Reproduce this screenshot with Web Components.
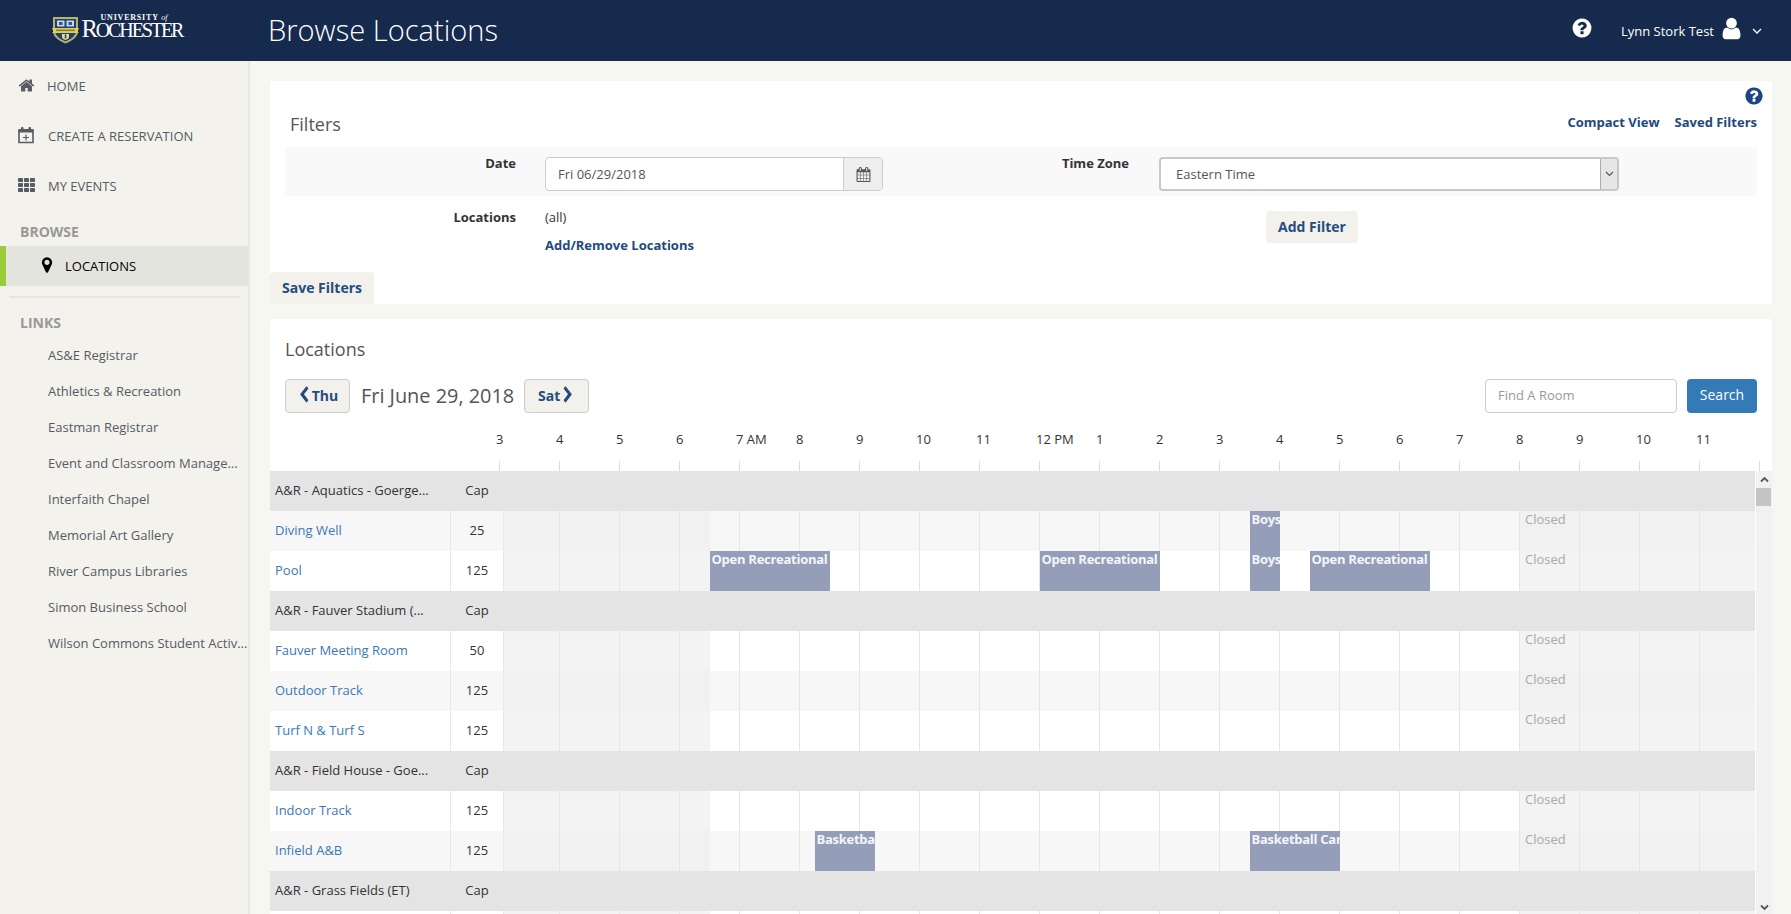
<!DOCTYPE html>
<html lang="en"><head><meta charset="utf-8"><title>Browse Locations</title>
<style>
html,body{margin:0;padding:0;height:100%;overflow:hidden;background:#f7f7f2;font-family:"Open Sans","Noto Sans",sans-serif;font-size:13px;color:#333}
</style></head><body>
<ur-app>
  <ur-header slot="header" title-text="Browse Locations" user="Lynn Stork Test"></ur-header>
  <ur-sidebar slot="side"></ur-sidebar>
  <ur-filters slot="main"></ur-filters>
  <ur-schedule slot="main"></ur-schedule>
</ur-app>
<script>
const P={
home:"M1472 992v480q0 26-19 45t-45 19h-384v-384h-256v384h-384q-26 0-45-19t-19-45v-480q0-1 .5-3t.5-3l575-474 575 474q1 2 1 6zm223-69l-62 74q-8 9-21 11h-3q-13 0-21-7l-692-577-692 577q-12 8-24 7-13-2-21-11l-62-74q-8-10-7-23.500t11-21.500l719-599q32-26 76-26t76 26l244 204v-195q0-14 9-23t23-9h192q14 0 23 9t9 23v408l219 182q10 8 11 21.500t-7 23.500z",
help:"M1024 1376v-192q0-14-9-23t-23-9h-192q-14 0-23 9t-9 23v192q0 14 9 23t23 9h192q14 0 23-9t9-23zm256-672q0-88-55.500-163t-138.500-116-170-41q-243 0-371 213-15 24 8 42l132 100q7 6 19 6 16 0 25-12 53-68 86-92 34-24 86-24 48 0 85.500 26t37.500 59q0 38-20 61t-68 45q-63 28-115.500 86.500t-52.500 125.500v36q0 14 9 23t23 9h192q14 0 23-9t9-23q0-19 21.500-49.500t54.500-49.500q32-18 49-28.500t46-35 44.500-48 28-60.500 12.500-81zm384 192q0 209-103 385.500t-279.500 279.500-385.500 103-385.500-103-279.500-279.500-103-385.500 103-385.500 279.500-279.500 385.500-103 385.500 103 279.500 279.500 103 385.500z",
user:"M1536 1399q0 109-62.500 187t-150.500 78h-854q-88 0-150.500-78t-62.500-187q0-85 8.500-160.500t31.500-152 58.500-131 94-89 134.500-34.500q131 128 313 128t313-128q76 0 134.500 34.500t94 89 58.500 131 31.500 152 8.500 160.500zm-256-887q0 159-112.500 271.500t-271.500 112.500-271.500-112.500-112.500-271.500 112.500-271.500 271.500-112.500 271.500 112.500 112.500 271.500z",
calendar:"M192 1664h288v-288h-288v288zm352 0h320v-288h-320v288zm-352-352h288v-320h-288v320zm352 0h320v-320h-320v320zm-352-384h288v-288h-288v288zm736 736h320v-288h-320v288zm-384-736h320v-288h-320v288zm768 736h288v-288h-288v288zm-384-352h320v-320h-320v320zm-352-864v-288q0-13-9.500-22.500t-22.500-9.500h-64q-13 0-22.500 9.500t-9.500 22.500v288q0 13 9.500 22.500t22.500 9.500h64q13 0 22.500-9.500t9.500-22.500zm736 864h288v-320h-288v320zm-384-384h320v-288h-320v288zm384 0h288v-288h-288v288zm32-480v-288q0-13-9.500-22.500t-22.500-9.500h-64q-13 0-22.500 9.500t-9.500 22.500v288q0 13 9.500 22.500t22.500 9.500h64q13 0 22.500-9.500t9.500-22.500zm384-64v1280q0 52-38 90t-90 38h-1408q-52 0-90-38t-38-90v-1280q0-52 38-90t90-38h128v-96q0-66 47-113t113-47h64q66 0 113 47t47 113v96h384v-96q0-66 47-113t113-47h64q66 0 113 47t47 113v96h128q52 0 90 38t38 90z",
marker:"M1152 640q0-106-75-181t-181-75-181 75-75 181 75 181 181 75 181-75 75-181zm256 0q0 109-33 179l-364 774q-16 33-47.500 52t-67.500 19-67.500-19-46.500-52l-365-774q-33-70-33-179 0-212 150-362t362-150 362 150 150 362z",
left:"M1427 301l-531 531 531 531q19 19 19 45t-19 45l-166 166q-19 19-45 19t-45-19l-742-742q-19-19-19-45t19-45l742-742q19-19 45-19t45 19l166 166q19 19 19 45t-19 45z",
right:"M1363 877l-742 742q-19 19-45 19t-45-19l-166-166q-19-19-19-45t19-45l531-531-531-531q-19-19-19-45t19-45l166-166q19-19 45-19t45 19l742 742q19 19 19 45t-19 45z"
};
const ic=(n,w,h,extra='')=>`<svg viewBox="0 0 1792 1792" width="${w}" height="${h||w}" fill="currentColor" preserveAspectRatio="none" style="display:block;flex:none;${extra}"><path d="${P[n]}"/></svg>`;
function def(name,css,html){
  customElements.define(name,class extends HTMLElement{
    constructor(){super();this.attachShadow({mode:'open'});}
    connectedCallback(){
      const h=typeof html==='function'?html(this):html;
      this.shadowRoot.innerHTML=`<style>${css}</style>${h}`;
    }
  });
}
def('ur-app',`:host{display:grid;grid-template-columns:250px 1541px;grid-template-rows:61px 853px;height:914px;overflow:hidden}
::slotted([slot=header]){grid-column:1/3}
.main{padding:20px 19px 0 20px;display:flex;flex-direction:column;gap:15px;overflow:hidden;min-height:0;box-sizing:border-box}`,
`<slot name="header"></slot><slot name="side"></slot><div class="main"><slot name="main"></slot></div>`);

def('ur-logo',`:host{display:flex;align-items:center;width:268px;padding-left:52px;box-sizing:border-box;flex:none;color:#fff;font-family:"Liberation Serif",serif}
svg{margin-top:-2px}
.t{margin-left:2.500px;display:flex;flex-direction:column;margin-top:-8px}
.u{font-size:8px;font-weight:700;letter-spacing:.8px;line-height:8px;margin-left:19px;margin-bottom:-3px;white-space:nowrap}
.u i{font-weight:400;letter-spacing:0}
.r{font-size:20px;line-height:19px;letter-spacing:-2.1px;white-space:nowrap}
.r b{font-weight:400;font-size:24.500px}`,
`<svg width="27" height="28" viewBox="0 0 27 28" style="flex:none;display:block">
<path d="M1 1h25v14c0 6-6 10-12.500 12.500C7 25 1 21 1 15z" fill="#b6b46a"/>
<path d="M3 3h21v12c0 5-5 8-10.500 10.500C8 23 3 20 3 15z" fill="#1e3f78"/>
<rect x="5" y="4.500" width="7.500" height="6" fill="#c9d6e6"/><rect x="14.500" y="4.500" width="7.500" height="6" fill="#c9d6e6"/>
<rect x="7" y="6" width="3.500" height="3" fill="#2f5690"/><rect x="16.500" y="6" width="3.500" height="3" fill="#2f5690"/>
<path d="M0 12h27l-1.500 3.500 1.500 1.500H0l1.500-1.500z" fill="#e3cf55"/><rect x="4" y="13.500" width="19" height="1.600" fill="#8c7f35"/>
<path d="M10 18h7v3c0 1.500-2 2.500-3.500 3C12 23.500 10 22.500 10 21z" fill="#e8dc8a"/><rect x="12.800" y="18.500" width="1.500" height="4" fill="#1e3f78"/>
</svg><div class="t"><div class="u">UNIVERSITY <i>of</i></div><div class="r"><b>R</b>OCHESTER</div></div>`);

def('ur-header',`:host{display:flex;align-items:center;height:61px;background:#152a4c;color:#fff}
h1{margin:-2px 0 0;font-weight:300;font-size:29.100px;line-height:38px;white-space:nowrap}
.r{margin-left:auto;display:flex;align-items:center;padding-right:29px}
.name{font-size:13px;margin-left:28px;margin-top:1px;white-space:nowrap}
.u{margin-left:5.250px}.c{margin-left:7.750px;margin-top:1px}`,
h=>`<ur-logo></ur-logo><h1>${h.getAttribute('title-text')}</h1><div class="r"><span style="margin-top:-5px">${ic('help',22)}</span><span class="name">${h.getAttribute('user')}</span><span class="u" style="margin-top:-4px">${ic('user',25,25)}</span><svg class="c" width="10" height="7" viewBox="0 0 10 7"><path d="M1 1l4 4 4-4" fill="none" stroke="#fff" stroke-width="1.300"/></svg></div>`);

def('nav-item',`:host{display:flex;align-items:center;height:50px;color:#555b68;font-size:13px;white-space:nowrap;padding-left:18px}
.i{width:17px;display:flex;justify-content:flex-start;margin-right:13px;margin-top:-2px;color:#565b66}
:host([active]){height:40px;background:#e4e4df;color:#000;border-left:6px solid #9acb38;padding-left:36px}
:host([active]) .i{color:#000;width:10px;margin-right:13px}
:host([first]) .i{margin-right:12px}`,
`<span class="i"><slot name="icon"></slot></span><slot></slot>`);
def('link-item',`:host{display:block;height:36px;line-height:36px;padding-left:48px;color:#555b66;font-size:13px;white-space:nowrap;overflow:hidden}`,`<slot></slot>`);

def('ur-sidebar',`:host{display:block;background:#f3f2ec;border-right:2px solid #e9e9e4;box-sizing:border-box;width:250px;height:853px;overflow:hidden}
h4{margin:0;font-size:14px;font-weight:700;line-height:18px;color:#999;padding-left:20px}
.b{margin-top:12px;margin-bottom:5px}
hr{border:0;height:2px;background:#e6e6e1;margin:10px 8px 16px 9px}
.l{margin-bottom:4.500px}`,
()=>`<nav-item first><span slot="icon">${ic('home',17,17)}</span>HOME</nav-item>
<nav-item><svg slot="icon" width="16" height="18" viewBox="0 0 16 18" style="display:block"><path d="M1 4.500h14v12H1z" fill="none" stroke="currentColor" stroke-width="1.600"/><rect x=".5" y="3" width="15" height="3.500" fill="currentColor"/><rect x="3" y="1" width="2.500" height="4" rx="1" fill="currentColor"/><rect x="10.500" y="1" width="2.500" height="4" rx="1" fill="currentColor"/><path d="M8 8.500v6M5 11.500h6" stroke="currentColor" stroke-width="1.200"/></svg>CREATE A RESERVATION</nav-item>
<nav-item><svg slot="icon" width="17" height="14" viewBox="0 0 17 14" style="display:block" fill="currentColor"><rect width="5" height="4" rx=".7"/><rect x="6" width="5" height="4" rx=".7"/><rect x="12" width="5" height="4" rx=".7"/><rect y="5" width="5" height="4" rx=".7"/><rect x="6" y="5" width="5" height="4" rx=".7"/><rect x="12" y="5" width="5" height="4" rx=".7"/><rect y="10" width="5" height="4" rx=".7"/><rect x="6" y="10" width="5" height="4" rx=".7"/><rect x="12" y="10" width="5" height="4" rx=".7"/></svg>MY EVENTS</nav-item>
<h4 class="b">BROWSE</h4>
<nav-item active><span slot="icon">${ic('marker',18,18,'margin-left:-4px')}</span>LOCATIONS</nav-item>
<hr><h4 class="l">LINKS</h4>
${['AS&amp;E Registrar','Athletics &amp; Recreation','Eastman Registrar','Event and Classroom Manage...','Interfaith Chapel','Memorial Art Gallery','River Campus Libraries','Simon Business School','Wilson Commons Student Activ...'].map(t=>`<link-item>${t}</link-item>`).join('')}`);

def('ur-button',`:host{display:inline-flex;align-items:center;justify-content:center;gap:1px;box-sizing:border-box;padding-bottom:2px;background:#f2f1ec;border-radius:4px;font-weight:700;font-size:14px;color:#264c7f;white-space:nowrap}
:host([outlined]){border:1px solid #ccc;height:34px}`,`<slot></slot>`);

def('ur-filters',`:host{display:block;background:#fff;border-radius:3px;height:223px;flex:none;overflow:hidden}
.top{display:flex;justify-content:space-between;height:66px;padding-right:15px}
h2{margin:30px 0 0 20px;font-size:18px;font-weight:400;line-height:26px;color:#555}
.rt{display:flex;flex-direction:column;align-items:flex-end}
.hp{color:#1d4380;margin:5px -7px 7px 0}
.lk{display:flex;gap:15px;font-weight:700;line-height:18px;color:#234a7d}
.row{display:grid;grid-template-columns:231px 367px 246px 490px;margin:0 15px}
.r1{background:#f9f9f9;height:49px}
.r2{height:76px}
.lb{text-align:right;font-weight:700;line-height:18px;padding-top:7px;color:#333}
.r2 .lb{padding-top:12px}
.v{margin-left:29px;padding-top:12px;line-height:18px}
.add{display:block;font-weight:700;color:#234a7d;margin-top:10px;white-space:nowrap}
.fld{box-sizing:border-box;height:34px;border:1px solid #ccc;border-radius:4px;background:#fff;display:flex;align-items:center;color:#555;overflow:hidden;margin-top:10px}
.dt{margin-left:29px}
.dt span{flex:1;padding-left:12px}
.ad{width:38px;height:100%;background:#eee;border-left:1px solid #ccc;display:flex;align-items:center;justify-content:center;color:#555}
.sel{margin-left:30px;border:2px solid #c8c8c8}
.sel span{flex:1;padding-left:15px}
.ar{width:16px;height:100%;background:#e6e6e6;border-left:1px solid #aaa;display:flex;align-items:center;justify-content:center}
.sv{display:flex;width:104px;height:32px;border-radius:4px 4px 0 0}
.afb{display:flex;margin:15px 0 0 383px;width:92px;height:32px}
`,
()=>`<div class="top"><h2>Filters</h2><div class="rt"><span class="hp">${ic('help',20)}</span><div class="lk"><span>Compact View</span><span>Saved Filters</span></div></div></div>
<div class="row r1"><div class="lb">Date</div><div class="fld dt"><span>Fri 06/29/2018</span><div class="ad">${ic('calendar',15)}</div></div><div class="lb">Time Zone</div><div class="fld sel"><span>Eastern Time</span><div class="ar"><svg width="9" height="6" viewBox="0 0 9 6"><path d="M1 1l3.500 3.500L8 1" fill="none" stroke="#555" stroke-width="1.100"/></svg></div></div></div>
<div class="row r2"><div class="lb">Locations</div><div class="v">(all)<span class="add">Add/Remove Locations</span></div><div style="grid-column:3/5"><ur-button class="afb">Add Filter</ur-button></div></div>
<ur-button class="sv">Save Filters</ur-button>`);

def('sched-event',`:host{position:absolute;top:0;bottom:0;background:#949eb8;color:#f4f5f8;font-weight:700;font-size:13px;line-height:17px;letter-spacing:-.27px;padding-left:1.500px;white-space:nowrap;overflow:hidden;box-sizing:border-box}`,`<slot></slot>`);

def('sched-row',`:host{display:flex;height:40px;flex:none;background:#fff;color:#333;--shade:#f3f3f3}
:host([alt]){background:#f7f7f7;--shade:#f0f1f0}
:host([group]){background:#e4e4e4}
.n{box-sizing:border-box;width:181px;padding-left:5px;line-height:38px;white-space:nowrap;overflow:hidden;border-right:1px solid #e8e8e8;color:#3a78b5}
.c{box-sizing:border-box;width:53px;text-align:center;line-height:38px;border-right:1px solid #e8e8e8}
:host([group]) .n{color:#333;border-color:transparent}
:host([group]) .c{border-color:transparent}
.t{flex:1;position:relative;display:flex}
.t::before{content:"";position:absolute;inset:0;background-image:linear-gradient(to right,#e6e6e6 1px,transparent 1px);background-size:60px 100%;background-position:55px 0}
.s{background:var(--shade);flex:none}
.o{flex:1}
.cl{color:#aaa;line-height:17px;padding-left:6px;box-sizing:border-box}
`,
h=>{
 const g=h.hasAttribute('group');
 return `<div class="n">${h.getAttribute('name')}</div><div class="c">${g?'Cap':h.getAttribute('cap')}</div>`+(g?'':`<div class="t"><div class="s" style="width:206px"></div><div class="o"></div><div class="s cl" style="width:236px">${h.hasAttribute('tail')?'':'Closed'}</div><slot></slot></div>`);
});

def('ur-hours',`:host{display:block;height:58px}
.l{display:grid;grid-template-columns:repeat(21,60px);margin-left:226px;padding-top:17px;line-height:18px;color:#333}
.k{display:grid;grid-template-columns:repeat(22,60px);margin:13px 0 0 229px;height:10px}
.k i{border-left:1px solid #ddd}`,
()=>{const L=['3','4','5','6','7 AM','8','9','10','11','12 PM','1','2','3','4','5','6','7','8','9','10','11'];
 return `<div class="l">${L.map(t=>`<span>${t}</span>`).join('')}</div><div class="k">${Array(22).fill('<i></i>').join('')}</div>`});

def('ur-scrollbar',`:host{display:flex;flex-direction:column;width:16px;margin-left:1px;background:#f1f1f1;height:443px;flex:none;align-items:center}
.t{height:17px;display:flex;align-items:center;justify-content:center;width:100%}
.th{height:18px;background:#c4c4c4;width:15px;align-self:flex-start}
.sp{flex:1}`,
`<div class="t"><svg width="9" height="7" viewBox="0 0 9 7"><path d="M1 5.500l3.500-3.500L8 5.500" fill="none" stroke="#555" stroke-width="1.800"/></svg></div><div class="th"></div><div class="sp"></div><div class="t" style="height:14px"><svg width="9" height="7" viewBox="0 0 9 7"><path d="M1 1.500l3.500 3.500L8 1.500" fill="none" stroke="#555" stroke-width="1.800"/></svg></div>`);

def('ur-schedule',`:host{display:block;background:#fff;border-radius:3px 3px 0 0;flex:1;min-height:0;overflow:hidden}
h2{margin:17px 0 17px 15px;font-size:18px;font-weight:400;line-height:26px;color:#555}
.nav{display:flex;align-items:center;margin:0 15px;height:34px}
.d{font-size:19.900px;color:#555;margin:-1px 10px 0 11px;white-space:nowrap}
.sr{margin-left:auto;box-sizing:border-box;width:192px;height:34px;border:1px solid #ccc;border-radius:4px;color:#999;line-height:30px;padding-left:12px;margin-right:10px}
.go{width:70px;height:34px;background:#337ab7;border-radius:4px;color:#fff;font-size:14px;text-align:center;line-height:32px}
.body{display:flex;align-items:flex-start;height:443px;overflow:hidden}
.rows{width:1485px;flex:none;display:flex;flex-direction:column}`,
()=>`<h2>Locations</h2><div class="nav"><ur-button outlined style="width:65px">${ic('left',14,18)}Thu</ur-button><span class="d">Fri June 29, 2018</span><ur-button outlined style="width:65px">Sat${ic('right',14,18)}</ur-button><div class="sr">Find A Room</div><div class="go">Search</div></div>
<ur-hours></ur-hours>
<div class="body"><div class="rows">
<sched-row group name="A&amp;R - Aquatics - Goerge..."></sched-row>
<sched-row alt name="Diving Well" cap="25"><sched-event style="left:746px;width:30px">Boys</sched-event></sched-row>
<sched-row name="Pool" cap="125"><sched-event style="left:206px;width:120px">Open Recreational</sched-event><sched-event style="left:536px;width:120px">Open Recreational</sched-event><sched-event style="left:746px;width:30px">Boys</sched-event><sched-event style="left:806px;width:120px">Open Recreational</sched-event></sched-row>
<sched-row group name="A&amp;R - Fauver Stadium (..."></sched-row>
<sched-row name="Fauver Meeting Room" cap="50"></sched-row>
<sched-row alt name="Outdoor Track" cap="125"></sched-row>
<sched-row name="Turf N &amp; Turf S" cap="125"></sched-row>
<sched-row group name="A&amp;R - Field House - Goe..."></sched-row>
<sched-row name="Indoor Track" cap="125"></sched-row>
<sched-row alt name="Infield A&amp;B" cap="125"><sched-event style="left:311px;width:60px">Basketball Camp</sched-event><sched-event style="left:746px;width:90px">Basketball Camp</sched-event></sched-row>
<sched-row group name="A&amp;R - Grass Fields (ET)"></sched-row>
<sched-row tail name="&nbsp;" cap="&nbsp;"></sched-row>
</div><ur-scrollbar></ur-scrollbar></div>`);
</script>
</body></html>
